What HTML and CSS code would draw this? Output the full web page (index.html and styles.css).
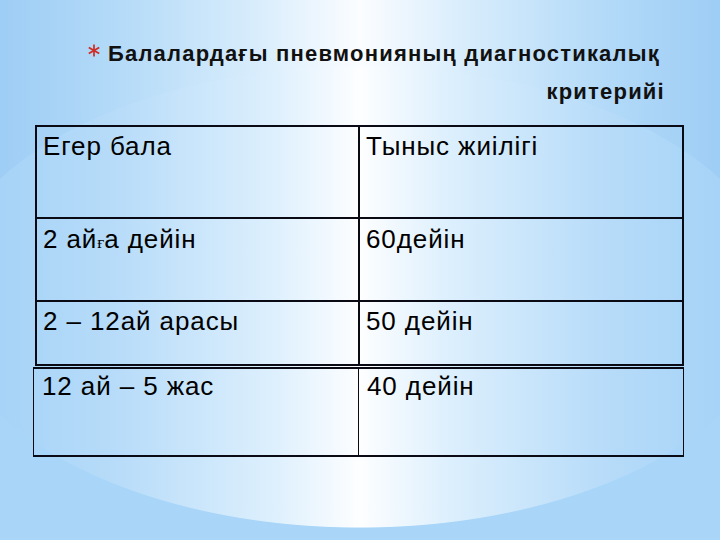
FILE: index.html
```html
<!DOCTYPE html>
<html lang="kk">
<head>
<meta charset="utf-8">
<title>Балалардағы пневмонияның диагностикалық критерийі</title>
<link rel="stylesheet" href="styles.css">
</head>
<body>
<div class="slide">
  <header class="head">
    <svg class="bullet" width="12" height="13" viewBox="0 0 12 13" aria-hidden="true">
      <g stroke="#d02a22" stroke-width="1.7" stroke-linecap="butt">
        <line x1="6" y1="0.5" x2="6" y2="12.5"/>
        <line x1="0.8" y1="3.5" x2="11.2" y2="9.5"/>
        <line x1="0.8" y1="9.5" x2="11.2" y2="3.5"/>
      </g>
    </svg>
    <h1 class="title">Балалардағы пневмонияның диагностикалық<br><span class="line2">критерийі</span></h1>
  </header>
  <div class="grid grid-main">
    <div class="cell r1">Егер бала</div><div class="cell r1">Тыныс жиілігі</div>
    <div class="cell r2">2 ай<span class="odd">ғ</span>а дейін</div><div class="cell r2">60дейін</div>
    <div class="cell r3">2 – 12ай арасы</div><div class="cell r3">50 дейін</div>
  </div>
  <div class="grid grid-extra">
    <div class="cell r4">12 ай – 5 жас</div><div class="cell r4">40 дейін</div>
  </div>
</div>
</body>
</html>
```
FILE: styles.css
```css
html, body {
  margin: 0;
  padding: 0;
}
body {
  width: 720px;
  height: 540px;
  overflow: hidden;
  position: relative;
  z-index: 0;
  background:
    linear-gradient(to bottom, transparent 297px, #a9d6f8 297px),
    linear-gradient(90deg, #9ecdf5 0%, #b3daf8 16%, #d9edfc 36%, #fbfdff 50%, #d9edfc 64%, #b3daf8 84%, #9ecdf5 100%);
  font-family: "Liberation Sans", Arial, sans-serif;
  color: #000;
}
body::before {
  content: "";
  position: absolute;
  z-index: -1;
  left: 0;
  top: 0;
  width: 720px;
  height: 540px;
  background: linear-gradient(90deg, #a6d3f7 0px, #b8dcf9 120px, #dceffd 270px, #fdfeff 360px, #dceffd 450px, #b8dcf9 600px, #a6d3f7 720px);
  -webkit-mask-image: radial-gradient(ellipse 420px 231px at 360px 297px, #000 99.6%, transparent 100%);
  mask-image: radial-gradient(ellipse 420px 231px at 360px 297px, #000 99.6%, transparent 100%);
}
.slide {
  display: flex;
  flex-direction: column;
  align-items: flex-start;
  padding-top: 35px;
}
.head {
  display: flex;
  align-items: flex-start;
  padding-left: 88px;
}
.bullet {
  flex: none;
  margin-top: 9px;
  margin-right: 8px;
}
.title {
  margin: 0;
  text-align: right;
  font-family: "Liberation Sans", Arial, sans-serif;
  font-weight: bold;
  font-size: 22px;
  line-height: 38px;
  letter-spacing: 1.2px;
  color: #111;
}
.line2 {
  margin-right: -5px;
}
.grid {
  display: grid;
  box-sizing: border-box;
  border-style: solid;
  border-color: #0a0a14;
}
.cell {
  box-sizing: border-box;
  border-style: solid;
  border-color: #0a0a14;
  border-width: 0;
  font-size: 26px;
  line-height: 30px;
  letter-spacing: 0.9px;
  padding-left: 6px;
}
.grid-main {
  margin: 14px 0 0 35px;
  width: 649px;
  border-width: 2px 0 0 2px;
  grid-template-columns: 323px 324px;
  grid-template-rows: 92px 83px 64px;
}
.grid-main .cell {
  border-right-width: 2px;
  border-bottom-width: 2px;
}
.grid-main .r1 { padding-top: 4px; }
.grid-main .r2 { padding-top: 5px; }
.grid-main .r3 { padding-top: 4px; }
.grid-extra {
  margin: 1px 0 0 33px;
  width: 651px;
  border-width: 2px 0 0 1px;
  grid-template-columns: 325px 325px;
  grid-template-rows: 88px;
}
.grid-extra .cell {
  border-right-width: 1px;
  border-bottom-width: 2px;
  padding-left: 8px;
  padding-top: 2px;
}
.odd {
  font-family: "Liberation Serif", serif;
  font-size: 17px;
  letter-spacing: 0;
}
```
